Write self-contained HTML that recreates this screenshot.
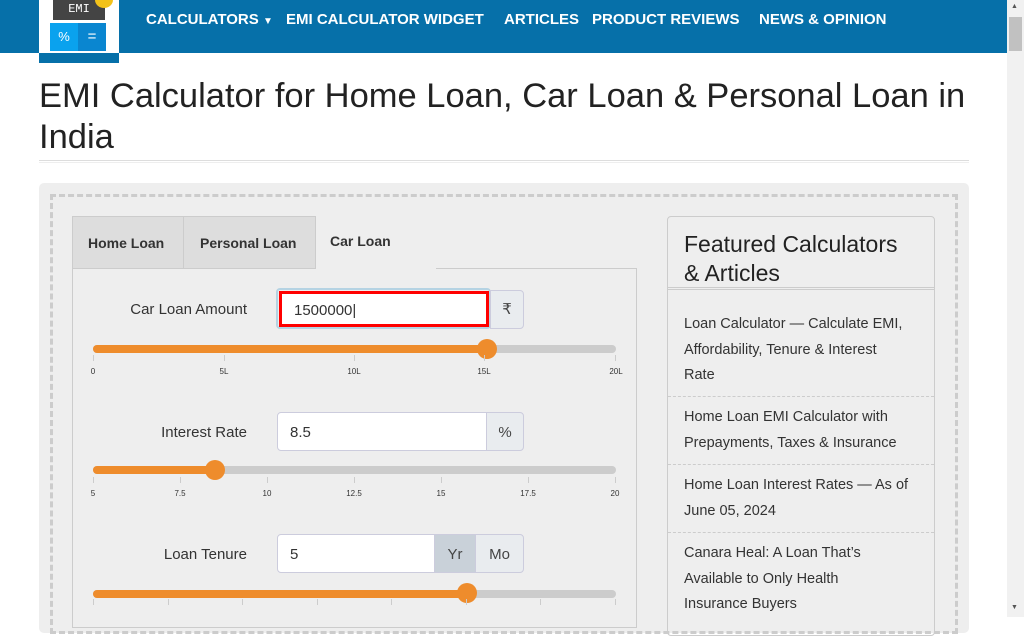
<!DOCTYPE html><html><head><style>
*{margin:0;padding:0;box-sizing:border-box}
body{width:1024px;height:617px;overflow:hidden;background:#fff;font-family:"Liberation Sans",sans-serif;color:#222;position:relative}
.a{position:absolute}
.nav{left:0;top:0;width:1007px;height:53px;background:#0670a9}
.lbl{font-size:15px;color:#333;text-align:right;width:200px}
.inp{background:#fff;border:1px solid #ccd;border-radius:4px 0 0 4px;height:39px;font-size:15px;padding:11px 12px;color:#333}
.add{background:#e9ecef;border:1px solid #ccd;height:39px;font-size:15px;text-align:center;padding-top:11px;color:#444}
.track{height:8px;border-radius:4px;background:#ccc;left:93px;width:523px}
.fill{height:8px;border-radius:4px;background:#ee8c2c}
.thumb{width:20px;height:20px;border-radius:50%;background:#ee8c2c}
.tk{font-size:8px;color:#333;width:30px;text-align:center}
.tl{width:1px;height:6px;background:#ccc}
.art{left:684px;font-size:14.5px;color:#333;line-height:25.5px;width:250px;white-space:nowrap}
.sep{left:668px;width:266px;border-top:1px dashed #ccc}
.nv{position:absolute;top:11px;color:#fff;font-weight:bold;font-size:15px}
</style></head><body>
<div class="a nav"></div>
<div class="a" style="left:39px;top:0;width:80px;height:53px;background:#fff"></div>
<div class="a" style="left:39px;top:53px;width:80px;height:10px;background:#0670a9"></div>
<div class="a" style="left:53px;top:0;width:52px;height:20px;background:#444;color:#fff;font-size:12px;font-family:'Liberation Mono',monospace;text-align:center;padding-top:2px">EMI</div>
<div class="a" style="left:95px;top:-8px;width:18px;height:16px;border-radius:50%;background:#f3c21a"></div>
<div class="a" style="left:50px;top:23px;width:28px;height:28px;background:#0aa2ee;color:#fff;font-size:13px;text-align:center;padding-top:6px">%</div>
<div class="a" style="left:78px;top:23px;width:28px;height:28px;background:#0a86d0;color:#fff;font-size:15px;text-align:center;padding-top:5px">=</div>
<span class="nv" style="left:146px">CALCULATORS <span style="font-size:10px">▼</span></span>
<span class="nv" style="left:286px">EMI CALCULATOR WIDGET</span>
<span class="nv" style="left:504px">ARTICLES</span>
<span class="nv" style="left:592px">PRODUCT REVIEWS</span>
<span class="nv" style="left:759px">NEWS &amp; OPINION</span>
<div class="a" style="left:1007px;top:0;width:17px;height:617px;background:#f1f1f1"></div>
<div class="a" style="left:1009px;top:17px;width:13px;height:34px;background:#c1c1c1"></div>
<div class="a" style="left:1011px;top:3px;font-size:7px;color:#555">▲</div>
<div class="a" style="left:1011px;top:604px;font-size:7px;color:#555">▼</div>
<div class="a" style="left:39px;top:76px;width:960px;font-size:34.5px;line-height:41px;color:#222">EMI Calculator for Home Loan, Car Loan &amp; Personal Loan in<br>India</div>
<div class="a" style="left:39px;top:160px;width:930px;border-top:1px solid #ddd;border-bottom:1px solid #eee;height:3px"></div>
<div class="a" style="left:39px;top:183px;width:930px;height:450px;background:#eee;border-radius:5px"></div>
<div class="a" style="left:50px;top:194px;width:908px;height:440px;border:3px dashed #ccc"></div>
<div class="a" style="left:72px;top:268px;width:565px;height:360px;border:1px solid #ccc"></div>
<div class="a" style="left:72px;top:216px;width:112px;height:53px;background:#ddd;border:1px solid #ccc;font-weight:bold;font-size:14px;color:#333;padding:18px 0 0 15px">Home Loan</div>
<div class="a" style="left:183px;top:216px;width:133px;height:53px;background:#ddd;border:1px solid #ccc;font-weight:bold;font-size:14px;color:#333;padding:18px 0 0 16px">Personal Loan</div>
<div class="a" style="left:316px;top:216px;width:120px;height:53px;background:#eee;font-weight:bold;font-size:14px;color:#333;padding:17px 0 0 14px">Car Loan</div>
<div class="a lbl" style="left:47px;top:301px">Car Loan Amount</div>
<div class="a" style="left:276px;top:288px;width:215px;height:41px;border:2px solid #b5d3e3;border-radius:4px"></div>
<div class="a inp" style="left:279px;top:291px;width:210px;height:36px;border:3px solid #f00;border-radius:0;padding:8px 12px">1500000|</div>
<div class="a add" style="left:490px;top:290px;width:34px;border-radius:0 4px 4px 0;padding-top:9px">₹</div>
<div class="a track" style="top:345px"><div class="fill" style="width:394px"></div></div>
<div class="a thumb" style="left:477px;top:339px"></div>
<div class="a tl" style="left:93px;top:355px"></div><div class="a tl" style="left:224px;top:355px"></div><div class="a tl" style="left:354px;top:355px"></div><div class="a tl" style="left:484px;top:355px"></div><div class="a tl" style="left:615px;top:355px"></div>
<div class="a tk" style="left:78px;top:367px">0</div><div class="a tk" style="left:209px;top:367px">5L</div><div class="a tk" style="left:339px;top:367px">10L</div><div class="a tk" style="left:469px;top:367px">15L</div><div class="a tk" style="left:601px;top:367px">20L</div>
<div class="a lbl" style="left:47px;top:424px">Interest Rate</div>
<div class="a inp" style="left:277px;top:412px;width:210px">8.5</div>
<div class="a add" style="left:486px;top:412px;width:38px;border-radius:0 4px 4px 0">%</div>
<div class="a track" style="top:466px"><div class="fill" style="width:122px"></div></div>
<div class="a thumb" style="left:205px;top:460px"></div>
<div class="a tl" style="left:93px;top:477px"></div><div class="a tl" style="left:180px;top:477px"></div><div class="a tl" style="left:267px;top:477px"></div><div class="a tl" style="left:354px;top:477px"></div><div class="a tl" style="left:441px;top:477px"></div><div class="a tl" style="left:528px;top:477px"></div><div class="a tl" style="left:615px;top:477px"></div>
<div class="a tk" style="left:78px;top:489px">5</div><div class="a tk" style="left:165px;top:489px">7.5</div><div class="a tk" style="left:252px;top:489px">10</div><div class="a tk" style="left:339px;top:489px">12.5</div><div class="a tk" style="left:426px;top:489px">15</div><div class="a tk" style="left:513px;top:489px">17.5</div><div class="a tk" style="left:600px;top:489px">20</div>
<div class="a lbl" style="left:47px;top:546px">Loan Tenure</div>
<div class="a inp" style="left:277px;top:534px;width:158px">5</div>
<div class="a add" style="left:434px;top:534px;width:42px;background:#c9d1d9">Yr</div>
<div class="a add" style="left:475px;top:534px;width:49px;border-radius:0 4px 4px 0">Mo</div>
<div class="a track" style="top:590px"><div class="fill" style="width:374px"></div></div>
<div class="a thumb" style="left:457px;top:583px"></div>
<div class="a tl" style="left:93px;top:599px"></div><div class="a tl" style="left:168px;top:599px"></div><div class="a tl" style="left:242px;top:599px"></div><div class="a tl" style="left:317px;top:599px"></div><div class="a tl" style="left:391px;top:599px"></div><div class="a tl" style="left:466px;top:599px"></div><div class="a tl" style="left:540px;top:599px"></div><div class="a tl" style="left:615px;top:599px"></div>
<div class="a" style="left:667px;top:216px;width:268px;height:420px;border:1px solid #ccc;border-radius:4px"></div>
<div class="a" style="left:684px;top:230px;font-size:23px;line-height:29px;color:#222;white-space:nowrap">Featured Calculators<br>&amp; Articles</div>
<div class="a" style="left:668px;top:287px;width:266px;border-top:1px solid #ccc;border-bottom:1px solid #ccc;height:3px"></div>
<div class="a art" style="top:312px">Loan Calculator — Calculate EMI,<br>Affordability, Tenure &amp; Interest<br>Rate</div>
<div class="a sep" style="top:396px"></div>
<div class="a art" style="top:405px">Home Loan EMI Calculator with<br>Prepayments, Taxes &amp; Insurance</div>
<div class="a sep" style="top:464px"></div>
<div class="a art" style="top:473px">Home Loan Interest Rates — As of<br>June 05, 2024</div>
<div class="a sep" style="top:532px"></div>
<div class="a art" style="top:541px">Canara Heal: A Loan That’s<br>Available to Only Health<br>Insurance Buyers</div>
</body></html>
